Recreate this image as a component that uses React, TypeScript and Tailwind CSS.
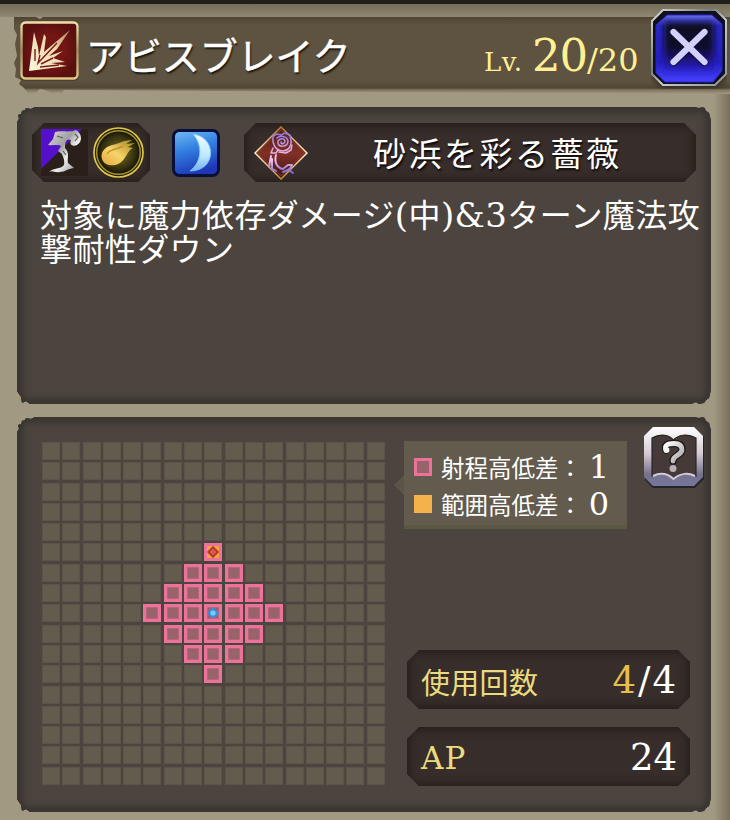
import React from 'react';
import clsx from 'clsx';

const GRID_SIZE = 17;
const CENTER = 8;
const RANGE = 3;

const SERIF = "font-['DejaVu_Serif','Noto_Sans_CJK_JP',serif]";
const JP = "font-['Noto_Sans_CJK_JP',sans-serif]";

const Chamfer: React.FC<{ className?: string; children: React.ReactNode }> = ({ className, children }) => (
    <div
        className={clsx(
            'flex h-[59px] items-center bg-[#372e2b] shadow-[inset_0_0_9px_3px_#261d19] [clip-path:polygon(12px_0,calc(100%-12px)_0,100%_12px,100%_calc(100%-12px),calc(100%-12px)_100%,12px_100%,0_calc(100%-12px),0_12px)]',
            className
        )}
    >
        {children}
    </div>
);

const Panel: React.FC<{ className?: string; children: React.ReactNode }> = ({ className, children }) => (
    <section
        className={clsx(
            'ml-[17px] w-[694px] rounded-[10px] bg-[#4c443e] shadow-[inset_0_0_0_3px_#3d3435,inset_0_0_7px_5px_#35322d] [clip-path:polygon(0_15px,2px_12px,1px_8px,4px_7px,5px_4px,8px_3px,9px_1px,14px_2px,18px_0,calc(100%-18px)_0,calc(100%-12px)_1px,calc(100%-7px)_0,calc(100%-5px)_4px,calc(100%-2px)_6px,calc(100%-1px)_10px,100%_14px,100%_calc(100%-15px),calc(100%-1px)_calc(100%-10px),calc(100%-2px)_calc(100%-6px),calc(100%-5px)_calc(100%-4px),calc(100%-7px)_calc(100%-1px),calc(100%-12px)_100%,calc(100%-15px)_calc(100%-2px),calc(100%-20px)_100%,13px_100%,9px_calc(100%-3px),5px_calc(100%-1px),4px_calc(100%-7px),0_calc(100%-13px))]',
            className
        )}
    >
        {children}
    </section>
);

const BurstIcon = () => (
    <svg viewBox="0 0 59 60" className="h-[60px] w-[59px] shrink-0">
        <defs>
            <radialGradient id="burstBg">
                <stop offset="0.55" stopColor="#731715" />
                <stop offset="1" stopColor="#5a100f" />
            </radialGradient>
            <linearGradient id="burstFrame" x1="0" y1="0" x2="0" y2="1">
                <stop offset="0" stopColor="#f0dfa8" />
                <stop offset="0.5" stopColor="#a18e60" />
                <stop offset="1" stopColor="#dfc889" />
            </linearGradient>
            <linearGradient id="burstRay" x1="0" y1="1" x2="1" y2="0">
                <stop offset="0" stopColor="#fff8da" />
                <stop offset="0.6" stopColor="#e9d9ad" />
                <stop offset="1" stopColor="#b08459" />
            </linearGradient>
        </defs>
        <rect x="0.5" y="1.5" width="58" height="58" rx="4" fill="#3e2e1b" />
        <rect x="1.5" y="1.5" width="56" height="56" rx="4" fill="url(#burstBg)" stroke="url(#burstFrame)" strokeWidth="2.4" />
        <path
            d="M9 50 L14 11 L18 26 L19 35 L24 13 L26 16 L24 31 L50 9 L37 28 L29 35 L43 30 L33 37 L45 41 L31 42 L47 45 Z"
            fill="url(#burstRay)"
        />
        <path d="M15 28 L15 40 M20 34 L18 42 L37 22 M21 43 L33 37 M20 46 L39 44" stroke="#7d1916" strokeWidth="1.4" fill="none" />
    </svg>
);

const CloseButton = () => (
    <button className="h-[80px] w-[76px] shrink-0" aria-label="close">
        <svg viewBox="0 0 76 80">
            <defs>
                <linearGradient id="closeRim" x1="0" y1="0" x2="1" y2="1">
                    <stop offset="0" stopColor="#d8dbda" />
                    <stop offset="0.4" stopColor="#777d80" />
                    <stop offset="0.55" stopColor="#c7ccce" />
                    <stop offset="1" stopColor="#8c9293" />
                </linearGradient>
                <linearGradient id="closeBlue" x1="0" y1="0" x2="0" y2="1">
                    <stop offset="0" stopColor="#6870ef" />
                    <stop offset="0.16" stopColor="#2b29c4" />
                    <stop offset="0.7" stopColor="#241fc0" />
                    <stop offset="1" stopColor="#4541ff" />
                </linearGradient>
                <linearGradient id="closeCore" x1="0" y1="0" x2="0" y2="1">
                    <stop offset="0" stopColor="#100821" />
                    <stop offset="0.55" stopColor="#11082b" />
                    <stop offset="1" stopColor="#291ec7" />
                </linearGradient>
                <filter id="closeSoft" x="-20%" y="-20%" width="140%" height="140%">
                    <feGaussianBlur stdDeviation="3" />
                </filter>
            </defs>
            <path d="M13 5 H65 L76 16 V68 L66 80 H12 L1 69 V15 Z" fill="#25231f" opacity="0.7" filter="url(#closeSoft)" />
            <path d="M12 1 H65 L75 11 V65 L64 76 H12 L1 65 V12 Z" fill="#10101a" stroke="url(#closeRim)" strokeWidth="2" />
            <path d="M16 6 H61 L71 15 V62 L62 73 H14 L5 64 V16 Z" fill="url(#closeBlue)" stroke="#2422c8" strokeWidth="1" />
            <rect x="13" y="13" width="50" height="48" fill="url(#closeCore)" filter="url(#closeSoft)" />
            <path d="M23 23 L53 53 M53 23 L23 53" stroke="#17103b" strokeWidth="8" strokeLinecap="round" />
            <path d="M22.5 23 L53.5 53 M53.5 23 L22.5 53" stroke="#d2d1fb" strokeWidth="6.2" strokeLinecap="round" />
        </svg>
    </button>
);

const StaffIcon = () => (
    <svg viewBox="0 0 47 47" className="h-[47px] w-[47px]">
        <defs>
            <linearGradient id="staffMetal" x1="0" y1="0" x2="1" y2="1">
                <stop offset="0" stopColor="#dddddd" />
                <stop offset="0.4" stopColor="#a0a0a0" />
                <stop offset="0.6" stopColor="#eeeeee" />
                <stop offset="1" stopColor="#808080" />
            </linearGradient>
        </defs>
        <path d="M0 0 H47 V47 H0 Z" fill="#2b2019" />
        <path d="M0 0 H41 L0 40 Z" fill="#5410ca" />
        <path
            d="M14 3 C20 1 28 4 35 1 C41 4 42 13 36 16 C31 18 28 15 30 11 C25 9 24 13 24 19 C29 24 26 29 27 34 L33 39 C28 39 24 43 19 43 C13 44 12 41 8 43 C13 38 19 41 23 36 C24 31 22 28 21 25 L17 22 L20 17 C17 15 13 17 7 16 L12 10 Z"
            fill="url(#staffMetal)"
        />
        <path d="M34 5 L37 8 L34 12 M16 7 L22 9 M22 22 L25 26" stroke="#5d5b5b" strokeWidth="1.2" fill="none" />
    </svg>
);

const MeteorIcon = () => (
    <svg viewBox="0 0 51 51" className="ml-[5px] h-[51px] w-[51px]">
        <defs>
            <radialGradient id="meteorBg">
                <stop offset="0" stopColor="#807821" />
                <stop offset="0.75" stopColor="#343010" />
                <stop offset="1" stopColor="#151305" />
            </radialGradient>
            <linearGradient id="meteorFire" x1="0" y1="1" x2="1" y2="0">
                <stop offset="0" stopColor="#e4a83c" />
                <stop offset="0.45" stopColor="#f6d468" />
                <stop offset="1" stopColor="#a0831d" />
            </linearGradient>
        </defs>
        <circle cx="25.5" cy="25.5" r="24.5" fill="#221d0c" stroke="#dfc74b" strokeWidth="1.7" />
        <circle cx="25.5" cy="25.5" r="21.8" fill="url(#meteorBg)" stroke="#a69228" strokeWidth="1.5" />
        <path
            d="M9 32 C7 25 12 20 19 18 C26 17 30 13 39 13 L33 17 L42 16 L35 20 L40 21 C34 24 33 32 27 36 C21 40 11 39 9 32 Z"
            fill="url(#meteorFire)"
        />
        <path d="M14 27 C18 21 25 23 30 19" stroke="#c08a2b" strokeWidth="1.2" fill="none" />
    </svg>
);

const MoonIcon = () => (
    <svg viewBox="0 0 48 48" className="ml-[22px] h-[48px] w-[48px] shrink-0">
        <defs>
            <linearGradient id="moonBg" x1="0" y1="0" x2="0.3" y2="1">
                <stop offset="0" stopColor="#75bdf3" />
                <stop offset="0.45" stopColor="#3483e4" />
                <stop offset="1" stopColor="#1f37b6" />
            </linearGradient>
            <linearGradient id="moonFill" x1="0" y1="0" x2="0" y2="1">
                <stop offset="0" stopColor="#f0fbff" />
                <stop offset="0.6" stopColor="#bce7ff" />
                <stop offset="1" stopColor="#70b2ef" />
            </linearGradient>
        </defs>
        <rect x="1.5" y="1.5" width="45" height="45" rx="6" fill="url(#moonBg)" stroke="#0a0e3b" strokeWidth="3" />
        <path d="M21 5 C45 8 45 42 18 42 C30 33 31 16 21 5 Z" fill="url(#moonFill)" stroke="#86caf7" strokeWidth="0.8" />
    </svg>
);

const RoseIcon = () => (
    <svg viewBox="0 0 54 54" className="ml-[10px] h-[54px] w-[54px] shrink-0">
        <defs>
            <linearGradient id="roseBg" x1="0" y1="0" x2="0" y2="1">
                <stop offset="0" stopColor="#4b1b19" />
                <stop offset="0.5" stopColor="#833026" />
                <stop offset="1" stopColor="#3a1512" />
            </linearGradient>
            <linearGradient id="roseLine" gradientUnits="userSpaceOnUse" x1="0" y1="7" x2="0" y2="48">
                <stop offset="0" stopColor="#8678e8" />
                <stop offset="0.35" stopColor="#d7a6df" />
                <stop offset="0.65" stopColor="#f4c1f0" />
                <stop offset="1" stopColor="#7660c7" />
            </linearGradient>
            <linearGradient id="roseFrame" x1="0" y1="0" x2="0" y2="1">
                <stop offset="0" stopColor="#b77a30" />
                <stop offset="0.5" stopColor="#fff1cd" />
                <stop offset="1" stopColor="#c08b35" />
            </linearGradient>
        </defs>
        <path d="M27 1 L53 27 L27 53 L1 27 Z" fill="url(#roseBg)" stroke="url(#roseFrame)" strokeWidth="1.5" />
        <path d="M27 4 L50 27 L27 50 L4 27 Z" fill="none" stroke="#863e28" strokeWidth="0.8" />
        <g fill="none" stroke="url(#roseLine)" strokeWidth="1.5" strokeLinecap="round" strokeLinejoin="round">
            <path d="M19 10 L23 8 L27 9 L31 7 L36 9 L37 14 C38 20 34 25 29 25 C23 25 18 20 19 10 M23 12 C26 9 33 10 34 15 C34 21 25 22 24 17 C23 13 30 11 31 15 C31 18 27 19 27 16" />
            <path d="M19 22 L17 27 L22 27 L24 24 M25 26 L32 27 L37 24 L38 19" />
            <path d="M22 29 C20 36 23 42 29 43 L34 39 L38 39 L36 43 L32 45" strokeWidth="2" />
            <path d="M17 30 L15 41 M18 33 L18 43 L22 45 M29 46 L35 44 L39 47" strokeWidth="2" />
        </g>
    </svg>
);

const HelpButton = () => (
    <button className="-mt-[15px] mr-[7px] h-[62px] w-[60px] shrink-0" aria-label="help">
        <svg viewBox="0 0 60 62">
            <defs>
                <linearGradient id="helpRim" x1="0" y1="0" x2="0" y2="1">
                    <stop offset="0" stopColor="#ffffff" />
                    <stop offset="0.45" stopColor="#d5c9d3" />
                    <stop offset="0.8" stopColor="#75728d" />
                    <stop offset="1" stopColor="#77769c" />
                </linearGradient>
                <linearGradient id="helpMark" x1="0" y1="0" x2="1" y2="1">
                    <stop offset="0" stopColor="#ffffff" />
                    <stop offset="1" stopColor="#aaa1a5" />
                </linearGradient>
            </defs>
            <path d="M10 2 H51 L60 10 V52 L51 61 H9 L1 53 V10 Z" fill="#252426" />
            <path d="M9 0 H50 L59 9 V50 L50 59 H9 L0 50 V9 Z" fill="url(#helpRim)" />
            <path
                d="M8 11 C17 6 25 8 29.5 13 C34 8 43 6 52 11 V49 C43 45 35 47 29.5 52 C24 47 17 45 8 49 Z"
                fill="#453a37"
                stroke="#292426"
                strokeWidth="1.2"
            />
            <path d="M9 49 C17 45 24 47 29.5 52 C35 47 43 45 51 49" stroke="#d2ccd8" strokeWidth="2" fill="none" />
            <path d="M22 23 C20 18 24 16.5 30 16.5 C36 16.5 38 19 38 23 C37 29 29 28 29 34" stroke="#1d1a1c" strokeWidth="7.5" strokeLinecap="round" fill="none" />
            <path d="M22 23 C20 18 24 16.5 30 16.5 C36 16.5 38 19 38 23 C37 29 29 28 29 34" stroke="url(#helpMark)" strokeWidth="4.8" strokeLinecap="round" fill="none" />
            <circle cx="22.5" cy="23" r="3" fill="#f6f4f5" />
            <circle cx="29" cy="41.5" r="3.5" fill="#b7b0b5" />
        </svg>
    </button>
);

const Cell: React.FC<{ row: number; col: number }> = ({ row, col }) => {
    const distance = Math.abs(row - CENTER) + Math.abs(col - CENTER);
    const isTarget = row === CENTER - RANGE && col === CENTER;
    return (
        <div
            className={clsx(
                'flex items-center justify-center',
                distance > RANGE && 'border border-[#5c5449] bg-[#635b4e]',
                distance <= RANGE && 'border-[3px] border-[#ed7299] shadow-[inset_0_0_0_1px_#b4667b]',
                distance <= RANGE && (isTarget ? 'bg-[#f1a244]' : 'bg-[#99636c]')
            )}
        >
            {distance === 0 && (
                <svg viewBox="0 0 12 12" className="h-3 w-3 shrink-0">
                    <path d="M6 0 L12 6 L6 12 L0 6 Z" fill="#388ae3" />
                    <circle cx="6" cy="6" r="2.6" fill="#72d0ff" />
                </svg>
            )}
            {isTarget && (
                <svg viewBox="0 0 12 12" className="h-3 w-3 shrink-0">
                    <rect width="12" height="12" fill="#f1a244" />
                    <path d="M6 1.2 L10.8 6 L6 10.8 L1.2 6 Z" fill="#db594e" stroke="#b93228" strokeWidth="1.8" />
                </svg>
            )}
        </div>
    );
};

const RangeGrid = () => (
    <div className="grid h-[343px] w-[343px] shrink-0 grid-cols-[repeat(17,18px)] grid-rows-[repeat(17,18px)] gap-[2.3px]">
        {Array.from({ length: GRID_SIZE * GRID_SIZE }, (_, i) => (
            <Cell key={i} row={Math.floor(i / GRID_SIZE)} col={i % GRID_SIZE} />
        ))}
    </div>
);

const App: React.FC = () => (
    <main
        lang="ja"
        className={clsx(
            'h-[820px] w-[730px] overflow-hidden bg-[#a19982] bg-[linear-gradient(90deg,transparent_714px,#796f5b_730px)] leading-none text-white',
            SERIF
        )}
    >
        <div className="h-1 bg-[#211f1c]" />
        <div className="h-[13px] bg-linear-to-b from-[#756c58] to-[#918873]" />

        {/* Skill name and level */}
        <header className="ml-[14px] flex h-[77px] bg-[linear-gradient(#504532,#5d5340_8px,#5d5340_64px,#514633_71px,#81775f_73px,#a19982_77px)] [clip-path:polygon(0_0,22px_0,26px_2px,29px_0,29px_-12px,100%_-12px,100%_100%,50px_73px,47px_76px,43px_75px,39px_77px,31px_73px,26px_72px,20px_77px,14px_76px,10px_71px,5px_67px,7px_63px,1px_60px,2px_52px,0_46px,3px_39px,1px_27px,3px_18px,0_12px)]">
            <div className="ml-[6px] mt-[4px]">
                <BurstIcon />
            </div>
            <h1
                className={clsx(
                    'ml-[7px] mt-[18px] w-[350px] whitespace-nowrap text-[38px] leading-[38px] tracking-[-0.1px] [-webkit-text-stroke:0.5px_white] [text-shadow:1px_2px_2px_#17130e]',
                    JP
                )}
            >
                アビスブレイク
            </h1>
            <p className="ml-[48px] flex w-[167px] items-baseline whitespace-nowrap text-[#fff094]">
                <span className="w-[48px] text-[26px] tracking-[0.5px]">Lv.</span>
                <span className="w-[55px] text-[45px] leading-[78px] tracking-[-1.2px]">20</span>
                <span className="text-[32px]">/20</span>
            </p>
            <div className="-mt-[8px]">
                <CloseButton />
            </div>
        </header>

        {/* Attributes and effect */}
        <Panel className="mt-[13px] h-[297px] pt-4">
            <div className="flex items-center pl-[15px]">
                <Chamfer className="w-[118px] pl-[9px]">
                    <StaffIcon />
                    <MeteorIcon />
                </Chamfer>
                <MoonIcon />
                <Chamfer className="ml-[24px] w-[452px]">
                    <RoseIcon />
                    <span className={clsx('ml-[65px] whitespace-nowrap text-[33px] tracking-[2.5px] [text-shadow:1px_2px_2px_#0b0807]', JP)}>
                        砂浜を彩る薔薇
                    </span>
                </Chamfer>
            </div>
            <div className={clsx('ml-[23px] mt-[14px] whitespace-nowrap text-[32px] leading-[34px] tracking-[0.4px]', JP)}>
                <p className="flex h-[34px] items-baseline">
                    対象に魔力依存ダメージ
                    <span className={clsx('text-[34px] leading-none', SERIF)}>(</span>
                    中
                    <span className={clsx('text-[34px] leading-none', SERIF)}>)&amp;3</span>
                    ターン魔法攻
                </p>
                <p>撃耐性ダウン</p>
            </div>
        </Panel>

        {/* Range, remaining uses and cost */}
        <Panel className="mt-[13px] flex h-[395px] pl-[25px] pt-[25px]">
            <RangeGrid />
            <div className="flex w-[326px] flex-col">
                <div className="flex items-start justify-between">
                    <div className="-mt-px ml-[9px] flex items-center">
                        <div className="h-5 w-[10px] bg-[#5b5449] [clip-path:polygon(0_50%,100%_0,100%_100%)]" />
                        <div className="flex h-[88px] w-[223px] flex-col justify-center border-b-4 border-[#5b5842] bg-[#625b4e] pl-[10px] pt-[5px]">
                            <div className="flex h-[37px] items-center">
                                <div className="h-[18px] w-[18px] border-[3px] border-[#ed7299] bg-[#99636c]" />
                                <span className={clsx('ml-[9px] mt-[2px] w-[144px] whitespace-nowrap text-[23.5px]', JP)}>射程高低差：</span>
                                <span className="w-7 text-center text-[32px]">1</span>
                            </div>
                            <div className="flex h-[37px] items-center">
                                <div className="h-[18px] w-[18px] bg-[#f3b24a]" />
                                <span className={clsx('ml-[9px] mt-[2px] w-[144px] whitespace-nowrap text-[23.5px]', JP)}>範囲高低差：</span>
                                <span className="w-7 text-center text-[32px]">0</span>
                            </div>
                        </div>
                    </div>
                    <HelpButton />
                </div>
                <div className="ml-[22px] mt-[121px] flex flex-col gap-[18px]">
                    <Chamfer className="w-[283px] justify-between pl-[14px] pr-[12px]">
                        <span className={clsx('mt-[3px] text-[29px] tracking-[0.3px] text-[#eadb7e]', JP)}>使用回数</span>
                        <span className="mt-[2px] text-[37px] tracking-[2px]">
                            <span className="text-[#e8bd50]">4</span>/4
                        </span>
                    </Chamfer>
                    <Chamfer className="w-[283px] justify-between pl-[14px] pr-[13px]">
                        <span className="mt-[4px] text-[31px] tracking-[1px] text-[#eadb7e]">AP</span>
                        <span className="mt-[2px] text-[37px]">24</span>
                    </Chamfer>
                </div>
            </div>
        </Panel>
    </main>
);

export default App;
